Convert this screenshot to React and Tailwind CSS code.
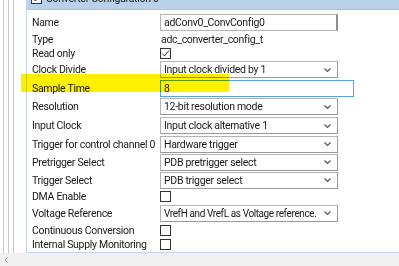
import React from "react";

const Chevron = () => (
  <svg width="9" height="6" viewBox="0 0 9 6" className="block shrink-0">
    <path d="M1.5 1.5 L4.5 4.5 L7.5 1.5" fill="none" stroke="#555" strokeWidth="1.2" />
  </svg>
);

const Select = ({ text, tight }) => (
  <div className="flex h-[17px] w-[178px] items-center justify-between border border-[#b4b4b4] border-r-[#9a9a9a] border-b-[#9a9a9a] bg-white pl-[3px] pr-[5px]">
    <span className={tight ? "whitespace-nowrap text-[10px] tracking-[-0.4px]" : "whitespace-nowrap"}>{text}</span>
    <Chevron />
  </div>
);

const Check = ({ checked }) => (
  <div className="flex h-[11px] w-[11px] shrink-0 items-center justify-center border border-[#333] bg-white">
    {checked && (
      <svg width="9" height="9" viewBox="0 0 9 9">
        <path d="M1 4.5 L3.5 7 L8 1.5" fill="none" stroke="#333" strokeWidth="1" />
      </svg>
    )}
  </div>
);

const Row = ({ label, h, children }) => (
  <div className={`flex items-center ${h}`}>
    <div className="w-[133px] shrink-0 pl-[5px] whitespace-nowrap">{label}</div>
    <div className="flex items-center">{children}</div>
  </div>
);

export default function App() {
  return (
    <div
      className="relative h-[266px] w-[399px] overflow-hidden bg-white text-[10.5px] tracking-[-0.3px] leading-[13px] text-[#1a1a1a]"
      style={{ fontFamily: "Roboto, 'Noto Sans', sans-serif" }}
    >
      <div className="flex h-[253px]">
        <div className="flex w-[26px] shrink-0">
          <div className="ml-[3px] h-full w-px bg-[#c8c8c8]" />
          <div className="ml-[4px] h-full w-px bg-[#c8c8c8]" />
          <div className="ml-[4px] h-full w-px bg-[#c8c8c8]" />
        </div>
        <div className="relative flex flex-1 flex-col border-l border-b border-[#c4d6ea]">
          <div className="-mt-[13px] flex h-[23px] items-center gap-[4px] border-b border-[#a9c3e0] bg-[#b9d1ea] pl-[4px]">
            <Check checked />
            <span>Converter Configuration 0</span>
          </div>
          <div className="pt-[3px]">
            <Row label="Name" h="h-[19px]">
              <div className="flex h-[17px] w-[178px] items-center border border-[#b4b4b4] border-r-[#8f8f8f] border-r-2 pl-[3px]">
                adConv0_ConvConfig0
              </div>
            </Row>
            <Row label="Type" h="h-[14px]">
              <span className="pl-[1px]">adc_converter_config_t</span>
            </Row>
            <Row label="Read only" h="h-[14px]">
              <Check checked />
            </Row>
            <Row label="Clock Divide" h="h-[19px]">
              <Select text="Input clock divided by 1" />
            </Row>
            <Row label="Sample Time" h="h-[18px]">
              <div className="flex h-[17px] w-[194px] items-center border border-[#5a9fe0] pl-[3px]">8</div>
            </Row>
            <Row label="Resolution" h="h-[19px]">
              <Select text="12-bit resolution mode" />
            </Row>
            <Row label="Input Clock" h="h-[19px]">
              <Select text="Input clock alternative 1" />
            </Row>
            <Row label="Trigger for control channel 0" h="h-[18px]">
              <Select text="Hardware trigger" />
            </Row>
            <Row label="Pretrigger Select" h="h-[18px]">
              <Select text="PDB pretrigger select" />
            </Row>
            <Row label="Trigger Select" h="h-[18px]">
              <Select text="PDB trigger select" />
            </Row>
            <Row label="DMA Enable" h="h-[14px]">
              <Check />
            </Row>
            <Row label="Voltage Reference" h="h-[20px]">
              <Select text="VrefH and VrefL as Voltage reference." tight />
            </Row>
            <Row label="Continuous Conversion" h="h-[14px]">
              <Check />
            </Row>
            <Row label="Internal Supply Monitoring" h="h-[14px]">
              <Check />
            </Row>
          </div>
        </div>
      </div>
      <div className="flex h-[13px] items-center bg-[#f0f0f0] pl-[4px]">
        <svg width="5" height="8" viewBox="0 0 5 8">
          <path d="M4 1 L1 4 L4 7" fill="none" stroke="#b0b0b0" strokeWidth="1" />
        </svg>
      </div>
      <div className="pointer-events-none absolute left-[21px] top-[74px] h-[18px] w-[208px] bg-[#fff000] mix-blend-multiply" />
    </div>
  );
}
